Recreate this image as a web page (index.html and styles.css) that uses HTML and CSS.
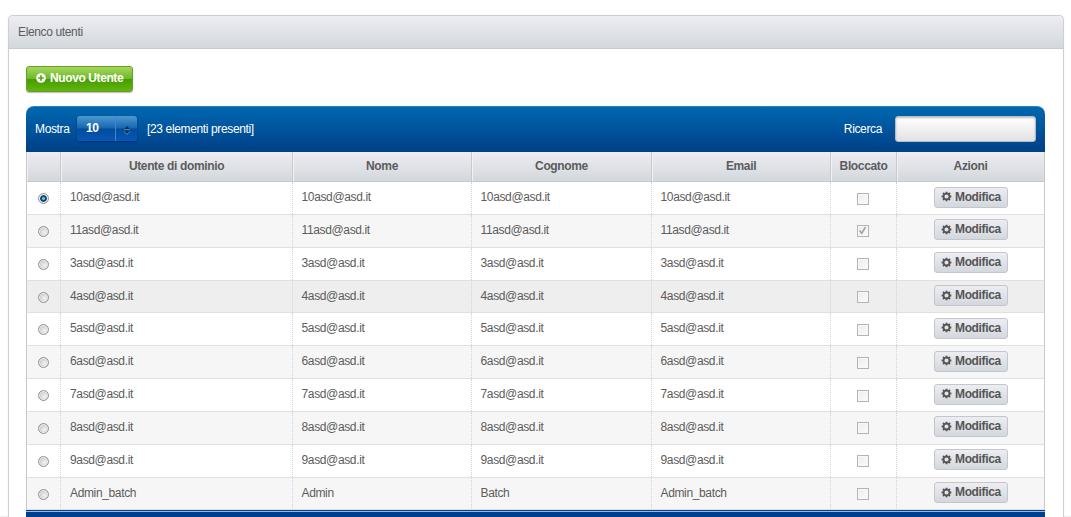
FILE: index.html
```
<!DOCTYPE html>
<html lang="it">
<head>
<meta charset="utf-8">
<title>Elenco utenti</title>
<link rel="stylesheet" href="styles.css">
</head>
<body>
<svg class="defs" width="0" height="0">
  <symbol id="gear" viewBox="0 0 12 12"><circle cx="6" cy="6" r="3.2" fill="none" stroke="#555" stroke-width="1.9"/><path d="M6 .7v1.8M6 9.5v1.8M.7 6h1.8M9.5 6h1.8M2.2 2.2l1.3 1.3M8.5 8.5l1.3 1.3M2.2 9.8l1.3-1.3M8.5 3.5l1.3-1.3" stroke="#555" stroke-width="2.1"/></symbol>
</svg>
<section class="panel">
  <header class="panel-head">Elenco utenti</header>
  <div class="panel-body">
    <button class="new-user"><svg width="10" height="10" viewBox="0 0 10 10"><circle cx="5" cy="5" r="4.8" fill="#fff"/><path d="M5 2.2v5.6M2.2 5h5.6" stroke="#57a51b" stroke-width="1.7"/></svg><span>Nuovo Utente</span></button>
    <div class="grid">
      <div class="toolbar">
        <span class="show">Mostra</span>
        <div class="select"><b>10</b><span class="arrows"><svg width="8" height="10" viewBox="0 0 8 10"><path d="M1 4.2L4 1l3 3.2z" fill="#102d50"/><path d="M1 5.8L4 9l3-3.2z" fill="#102d50"/><path d="M1 4.6h6M1 6.2L4 9.5l3-3.3" fill="none" stroke="#5c9bdb" stroke-width=".8"/></svg></span></div>
        <span class="count">[23 elementi presenti]</span>
        <span class="search-label">Ricerca</span>
        <input class="search" type="text" aria-label="Ricerca">
      </div>
      <div class="row head"><div></div><div>Utente di dominio</div><div>Nome</div><div>Cognome</div><div>Email</div><div>Bloccato</div><div>Azioni</div></div>
      <div class="row"><div><i class="radio on"></i></div><div>10asd@asd.it</div><div>10asd@asd.it</div><div>10asd@asd.it</div><div>10asd@asd.it</div><div><i class="check"></i></div><div><button class="edit"><svg width="11" height="11"><use href="#gear"/></svg><span>Modifica</span></button></div></div>
      <div class="row alt"><div><i class="radio"></i></div><div>11asd@asd.it</div><div>11asd@asd.it</div><div>11asd@asd.it</div><div>11asd@asd.it</div><div><i class="check"><svg width="9" height="9" viewBox="0 0 9 9"><path d="M1.5 4.5L3.7 7.3 7.5 1" fill="none" stroke="#a3a3a3" stroke-width="1.6"/></svg></i></div><div><button class="edit"><svg width="11" height="11"><use href="#gear"/></svg><span>Modifica</span></button></div></div>
      <div class="row"><div><i class="radio"></i></div><div>3asd@asd.it</div><div>3asd@asd.it</div><div>3asd@asd.it</div><div>3asd@asd.it</div><div><i class="check"></i></div><div><button class="edit"><svg width="11" height="11"><use href="#gear"/></svg><span>Modifica</span></button></div></div>
      <div class="row hover"><div><i class="radio"></i></div><div>4asd@asd.it</div><div>4asd@asd.it</div><div>4asd@asd.it</div><div>4asd@asd.it</div><div><i class="check"></i></div><div><button class="edit"><svg width="11" height="11"><use href="#gear"/></svg><span>Modifica</span></button></div></div>
      <div class="row"><div><i class="radio"></i></div><div>5asd@asd.it</div><div>5asd@asd.it</div><div>5asd@asd.it</div><div>5asd@asd.it</div><div><i class="check"></i></div><div><button class="edit"><svg width="11" height="11"><use href="#gear"/></svg><span>Modifica</span></button></div></div>
      <div class="row alt"><div><i class="radio"></i></div><div>6asd@asd.it</div><div>6asd@asd.it</div><div>6asd@asd.it</div><div>6asd@asd.it</div><div><i class="check"></i></div><div><button class="edit"><svg width="11" height="11"><use href="#gear"/></svg><span>Modifica</span></button></div></div>
      <div class="row"><div><i class="radio"></i></div><div>7asd@asd.it</div><div>7asd@asd.it</div><div>7asd@asd.it</div><div>7asd@asd.it</div><div><i class="check"></i></div><div><button class="edit"><svg width="11" height="11"><use href="#gear"/></svg><span>Modifica</span></button></div></div>
      <div class="row alt"><div><i class="radio"></i></div><div>8asd@asd.it</div><div>8asd@asd.it</div><div>8asd@asd.it</div><div>8asd@asd.it</div><div><i class="check"></i></div><div><button class="edit"><svg width="11" height="11"><use href="#gear"/></svg><span>Modifica</span></button></div></div>
      <div class="row"><div><i class="radio"></i></div><div>9asd@asd.it</div><div>9asd@asd.it</div><div>9asd@asd.it</div><div>9asd@asd.it</div><div><i class="check"></i></div><div><button class="edit"><svg width="11" height="11"><use href="#gear"/></svg><span>Modifica</span></button></div></div>
      <div class="row alt"><div><i class="radio"></i></div><div>Admin_batch</div><div>Admin</div><div>Batch</div><div>Admin_batch</div><div><i class="check"></i></div><div><button class="edit"><svg width="11" height="11"><use href="#gear"/></svg><span>Modifica</span></button></div></div>
      <div class="foot"></div>
    </div>
  </div>
</section>
</body>
</html>
```
FILE: styles.css
```
* { box-sizing: border-box; }
html, body { height: 517px; overflow: hidden; }
body {
  margin: 0;
  padding: 15px 7px 0 8px;
  background: linear-gradient(#ededed, #ededed) 0 516px / 100% 1px no-repeat #fff;
  color: #5c5c5c;
  font: 12px/14px "Liberation Sans", Arial, sans-serif;
  letter-spacing: -.36px;
}
.defs { position: absolute; }
button { font: inherit; letter-spacing: inherit; margin: 0; padding: 0; }
.panel {
  height: 502px;
  border: 1px solid #cfcfcf;
  border-bottom: 0;
  border-radius: 5px 5px 0 0;
  box-shadow: 0 0 1px #ccc;
  background: #fff;
  overflow: hidden;
}
.panel-head {
  height: 33px;
  padding: 9px 9px 0;
  border-bottom: 1px solid #c5c8cc;
  border-radius: 4px 4px 0 0;
  background: linear-gradient(#ededf3, #d3d8dd);
}
.panel-body { padding: 17px 18px 0 17px; }
.new-user {
  display: flex;
  align-items: center;
  gap: 4px;
  width: 107px;
  height: 26px;
  padding: 0 0 2px 9px;
  border: 1px solid #63a024;
  border-radius: 3px;
  background: linear-gradient(#a6d65c 0, #6fb92b 48%, #469c02 52%, #62b50c 100%);
  box-shadow: 0 1px 1px #bbb;
  color: #fff;
  font-weight: bold;
  letter-spacing: -.4px;
  white-space: nowrap;
}
.grid { margin-top: 14px; }
.toolbar {
  display: flex;
  align-items: center;
  height: 46px;
  padding: 0 9px 2px;
  border-radius: 8px 8px 0 0;
  border-top: 1px solid #337fbb;
  background: linear-gradient(#0068b0, #003f88);
  color: #fff;
}
.show { width: 42px; }
.select {
  display: flex;
  width: 60px;
  height: 25px;
  border-radius: 3px;
  background: linear-gradient(#4c99d0 0, #1767b1 48%, #004c9c 52%, #0758b6 100%);
  box-shadow: 0 1px 2px #00306c;
}
.select b { width: 38px; padding: 5px 0 0 9px; }
.arrows {
  display: flex;
  align-items: center;
  justify-content: center;
  width: 22px;
  padding-top: 2px;
  border-left: 1px solid #3f87cc;
}
.count { margin-left: 10px; }
.search-label { margin-left: auto; margin-right: 13px; }
.search {
  width: 141px;
  height: 26px;
  border: 1px solid #b9bec4;
  border-radius: 3px;
  background: linear-gradient(#fff, #e2e2e2);
  box-shadow: inset 0 1px 2px #bbb;
}
.row {
  display: grid;
  grid-template-columns: 34px 232px 179px 180px 179px 66px 147px;
  height: 32.85px;
  border: 1px solid #c6c8cb;
  border-top: 0;
  border-bottom-color: #e0e0e0;
  background: #fff;
}
.row.alt { background: #f6f6f6; }
.row.hover { background: #eee; }
.row > div { padding: 8px 0 0 9px; border-right: 1px dotted #d4d4d4; }
.row > div:last-child { border-right: 0; }
.row:not(.head) > div:nth-child(n+3):nth-child(-n+5) { padding-left: 8.5px; }
.row.head {
  height: 30px;
  border-bottom: 1px solid #c6cacf;
  background: linear-gradient(#ededf2, #d3d8dc);
  font-weight: bold;
  text-align: center;
}
.row.head > div { padding: 7px 0 0; border-right: 1px solid #c6cacf; box-shadow: inset 1px 0 #f2f2f4; }
.row.head > div:last-child { border-right: 0; }
.row:not(.head) > div:nth-child(1) { padding: 11px 0 0 11px; }
.row:not(.head) > div:nth-child(6) { padding: 10.5px 0 0 26px; }
.row:not(.head) > div:nth-child(7) { padding: 4.5px 0 0 37px; }
.radio {
  display: block;
  width: 11px;
  height: 11px;
  border: 1px solid #929292;
  border-radius: 50%;
  background: radial-gradient(circle at 60% 60%, #f4f4f4, #c4c4c4 75%);
  box-shadow: inset 0 0 0 1px #eee;
}
.radio.on { background: radial-gradient(circle, #63c5ee 0 1px, #12466e 2px 3px, #eee 4px); }
.check {
  display: block;
  width: 12px;
  height: 12px;
  border: 1px solid #b4b4b4;
  background: linear-gradient(135deg, #ededed, #fafafa);
  box-shadow: inset 0 0 0 1px #f8f8f8;
}
.check svg { display: block; }
.edit {
  display: flex;
  align-items: center;
  gap: 3px;
  width: 74px;
  height: 21px;
  padding: 0 0 1px 6px;
  border: 1px solid #c3c6cb;
  border-radius: 3px;
  background: linear-gradient(#ededf2, #d3d8dd);
  color: #555;
  font-weight: bold;
}
.foot { height: 20px; border-top: 1px solid #00408c; background: linear-gradient(#9bb9da 0 1px, #003f8c 1px); }
```
